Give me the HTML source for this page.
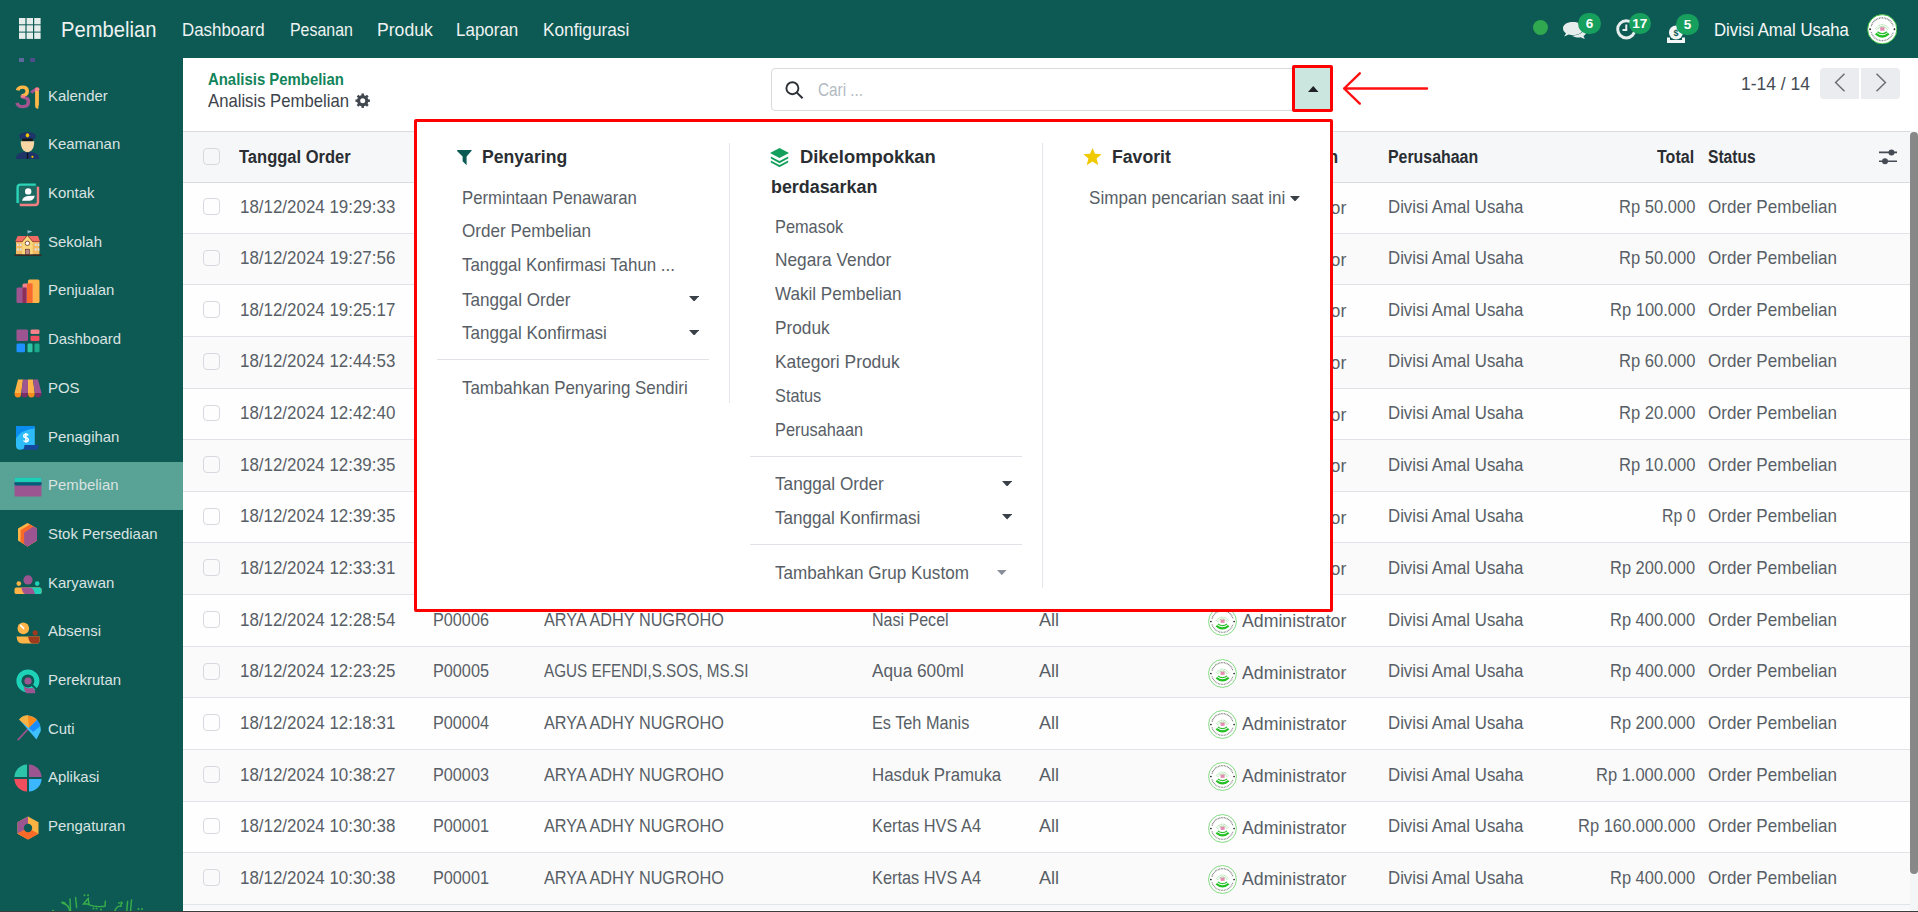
<!DOCTYPE html><html><head><meta charset="utf-8"><style>
*{box-sizing:border-box;margin:0;padding:0}
html,body{width:1918px;height:912px;overflow:hidden;background:#fff;font-family:"Liberation Sans",sans-serif;position:relative}
.a{position:absolute;white-space:nowrap}
.cb{width:16.8px;height:16.8px;border:1px solid #d6d9de;border-radius:4px;background:transparent}
.badge{position:absolute;background:#17a05d;color:#fff;font-size:13.5px;font-weight:700;text-align:center;border-radius:11px;height:21px;line-height:21px}
</style></head><body>

<div class="a" style="left:0;top:0;width:1918px;height:58px;background:#0d5a55"></div>
<svg class="a" style="left:19px;top:18px" width="22" height="21" viewBox="0 0 22 21"><rect x="0.0" y="0.0" width="6.4" height="6.3" fill="#e6eeec"/><rect x="7.6" y="0.0" width="6.4" height="6.3" fill="#e6eeec"/><rect x="15.2" y="0.0" width="6.4" height="6.3" fill="#e6eeec"/><rect x="0.0" y="7.3" width="6.4" height="6.3" fill="#e6eeec"/><rect x="7.6" y="7.3" width="6.4" height="6.3" fill="#e6eeec"/><rect x="15.2" y="7.3" width="6.4" height="6.3" fill="#e6eeec"/><rect x="0.0" y="14.6" width="6.4" height="6.3" fill="#e6eeec"/><rect x="7.6" y="14.6" width="6.4" height="6.3" fill="#e6eeec"/><rect x="15.2" y="14.6" width="6.4" height="6.3" fill="#e6eeec"/></svg>
<div class="a" style="left:60.60px;top:19.50px;font-size:21.37px;line-height:20px;font-weight:400;color:#eef2f1;transform:scaleX(0.9449);transform-origin:0 0;">Pembelian</div>
<div class="a" style="left:182.40px;top:20.15px;font-size:18.90px;line-height:20px;font-weight:400;color:#eef2f1;transform:scaleX(0.8946);transform-origin:0 0;">Dashboard</div>
<div class="a" style="left:290.30px;top:20.15px;font-size:18.90px;line-height:20px;font-weight:400;color:#eef2f1;transform:scaleX(0.8432);transform-origin:0 0;">Pesanan</div>
<div class="a" style="left:377.20px;top:20.15px;font-size:18.90px;line-height:20px;font-weight:400;color:#eef2f1;transform:scaleX(0.9320);transform-origin:0 0;">Produk</div>
<div class="a" style="left:456.40px;top:20.15px;font-size:18.90px;line-height:20px;font-weight:400;color:#eef2f1;transform:scaleX(0.8984);transform-origin:0 0;">Laporan</div>
<div class="a" style="left:542.80px;top:20.15px;font-size:18.90px;line-height:20px;font-weight:400;color:#eef2f1;transform:scaleX(0.9129);transform-origin:0 0;">Konfigurasi</div>
<div class="a" style="left:1532.7px;top:19.7px;width:15.8px;height:15.8px;border-radius:50%;background:#2fa84f"></div>
<svg class="a" style="left:1562px;top:20px" width="25" height="20" viewBox="0 0 25 20">
<path d="M11 2 C17 2 21 4.5 21 8.5 C21 12.5 17 15 11 15 C9.5 15 8 14.8 6.7 14.4 L2.2 16.4 L4 13.2 C2 12 1 10.4 1 8.5 C1 4.5 5 2 11 2Z" fill="#e6eded"/>
<path d="M22 9 C23.5 10 24 11.2 24 12.5 C24 14 23 15.2 21.5 16 L22.8 19 L18.5 17.3 C17.5 17.5 16.5 17.6 15.5 17.5 C13 17.3 11 16.5 10 15.5 C16 15.5 21.5 13 22 9Z" fill="#e6eded"/>
</svg>
<div class="badge" style="left:1578px;top:12.7px;width:22.8px">6</div>
<svg class="a" style="left:1616px;top:18.5px" width="21" height="21" viewBox="0 0 21 21">
<circle cx="10.3" cy="10.3" r="8.6" fill="none" stroke="#e6eded" stroke-width="3"/>
<path d="M10.3 5.5 V11 H6.5" fill="none" stroke="#e6eded" stroke-width="2"/></svg>
<div class="badge" style="left:1628.7px;top:12.7px;width:22px">17</div>
<svg class="a" style="left:1665.5px;top:23.5px" width="20" height="20" viewBox="0 0 20 20">
<circle cx="10" cy="8.5" r="7" fill="#f4f7f7"/>
<text x="10" y="12" font-size="9" font-weight="700" text-anchor="middle" fill="#0d5a55" font-family="Liberation Sans">$</text>
<path d="M1 13.5 H4 V16 H16 V13.5 H19 V19 H1Z" fill="#f4f7f7"/></svg>
<div class="badge" style="left:1676.3px;top:13.8px;width:22.5px">5</div>
<div class="a" style="left:1714.30px;top:19.95px;font-size:18.90px;line-height:20px;font-weight:400;color:#f6f8f8;transform:scaleX(0.8858);transform-origin:0 0;">Divisi Amal Usaha</div>
<div class="a" style="left:1866.8px;top:13.6px"><svg width="30.5" height="30.5" viewBox="0 0 30 30"><circle cx="15" cy="15" r="14.4" fill="#fff" stroke="#33bb33" stroke-width="0.9"/>
<path d="M4.2 12 A11.2 11.2 0 0 1 25.8 12" fill="none" stroke="#777" stroke-width="1.3" stroke-dasharray="0.9 0.7"/>
<path d="M4.2 18 A11.2 11.2 0 0 0 25.8 18" fill="none" stroke="#888" stroke-width="1.3" stroke-dasharray="0.9 0.7"/>
<circle cx="3" cy="15" r="0.9" fill="#222"/><circle cx="27" cy="15" r="0.9" fill="#222"/>
<path d="M8.2 14.5 Q15 6.5 21.8 14.5" fill="none" stroke="#8ad88a" stroke-width="0.9" stroke-dasharray="1 0.6"/>
<path d="M10 15.2 Q15 9.5 20 15.2" fill="none" stroke="#5cc95c" stroke-width="0.9" stroke-dasharray="1 0.6"/>
<rect x="13" y="13" width="4.2" height="3.4" fill="#e48bb0"/>
<path d="M10.3 17.6 Q15 21 19.7 17.6" fill="none" stroke="#2ec12e" stroke-width="1.4"/>
<path d="M8.6 19.4 Q15 25 21.4 19.4" fill="none" stroke="#22bf22" stroke-width="2.3"/>
</svg></div>
<div class="a" style="left:0;top:58px;width:183px;height:854px;background:#0d5a55"></div>
<div class="a" style="left:0;top:462px;width:183px;height:48px;background:#58a296"></div>
<div class="a" style="left:47.80px;top:85.81px;font-size:15.55px;line-height:20px;font-weight:400;color:#d9e3e1;transform:scaleX(0.96);transform-origin:0 0;">Kalender</div>
<div class="a" style="left:47.80px;top:134.48px;font-size:15.55px;line-height:20px;font-weight:400;color:#d9e3e1;transform:scaleX(0.96);transform-origin:0 0;">Keamanan</div>
<div class="a" style="left:47.80px;top:183.15px;font-size:15.55px;line-height:20px;font-weight:400;color:#d9e3e1;transform:scaleX(0.96);transform-origin:0 0;">Kontak</div>
<div class="a" style="left:47.80px;top:231.82px;font-size:15.55px;line-height:20px;font-weight:400;color:#d9e3e1;transform:scaleX(0.96);transform-origin:0 0;">Sekolah</div>
<div class="a" style="left:47.80px;top:280.49px;font-size:15.55px;line-height:20px;font-weight:400;color:#d9e3e1;transform:scaleX(0.96);transform-origin:0 0;">Penjualan</div>
<div class="a" style="left:47.80px;top:329.16px;font-size:15.55px;line-height:20px;font-weight:400;color:#d9e3e1;transform:scaleX(0.96);transform-origin:0 0;">Dashboard</div>
<div class="a" style="left:47.80px;top:377.83px;font-size:15.55px;line-height:20px;font-weight:400;color:#d9e3e1;transform:scaleX(0.96);transform-origin:0 0;">POS</div>
<div class="a" style="left:47.80px;top:426.50px;font-size:15.55px;line-height:20px;font-weight:400;color:#d9e3e1;transform:scaleX(0.96);transform-origin:0 0;">Penagihan</div>
<div class="a" style="left:47.80px;top:475.17px;font-size:15.55px;line-height:20px;font-weight:400;color:#d9e3e1;transform:scaleX(0.96);transform-origin:0 0;">Pembelian</div>
<div class="a" style="left:47.80px;top:523.84px;font-size:15.55px;line-height:20px;font-weight:400;color:#d9e3e1;transform:scaleX(0.96);transform-origin:0 0;">Stok Persediaan</div>
<div class="a" style="left:47.80px;top:572.51px;font-size:15.55px;line-height:20px;font-weight:400;color:#d9e3e1;transform:scaleX(0.96);transform-origin:0 0;">Karyawan</div>
<div class="a" style="left:47.80px;top:621.18px;font-size:15.55px;line-height:20px;font-weight:400;color:#d9e3e1;transform:scaleX(0.96);transform-origin:0 0;">Absensi</div>
<div class="a" style="left:47.80px;top:669.85px;font-size:15.55px;line-height:20px;font-weight:400;color:#d9e3e1;transform:scaleX(0.96);transform-origin:0 0;">Perekrutan</div>
<div class="a" style="left:47.80px;top:718.52px;font-size:15.55px;line-height:20px;font-weight:400;color:#d9e3e1;transform:scaleX(0.96);transform-origin:0 0;">Cuti</div>
<div class="a" style="left:47.80px;top:767.19px;font-size:15.55px;line-height:20px;font-weight:400;color:#d9e3e1;transform:scaleX(0.96);transform-origin:0 0;">Aplikasi</div>
<div class="a" style="left:47.80px;top:815.86px;font-size:15.55px;line-height:20px;font-weight:400;color:#d9e3e1;transform:scaleX(0.96);transform-origin:0 0;">Pengaturan</div>
<div class="a" style="left:19px;top:58px;width:4.6px;height:3.7px;background:#5b6a9a"></div>
<div class="a" style="left:30px;top:58px;width:5.4px;height:3.7px;background:#4d4d8c"></div>
<svg class="a" style="left:12px;top:82px" width="32" height="30" viewBox="0 0 32 30"><g transform="translate(0 1.6) scale(1 0.9)"><path d="M5.6 7.6 Q6.4 4 10.6 4 Q15.2 4 15.2 8.6 Q15.2 13 9.6 13.6" fill="none" stroke="#ffb847" stroke-width="3.6"/>
<path d="M9.6 15 Q16.4 15 16.4 20.2 Q16.4 25.6 10.6 25.6 Q6 25.6 5 21.3" fill="none" stroke="#a0558f" stroke-width="3.6"/>
<path d="M8.6 14.3 H13" stroke="#f98289" stroke-width="2.6"/>
<path d="M19.2 10 L24.6 5.6" stroke="#a0558f" stroke-width="3.2"/>
<path d="M25 6.2 V24.6 Q25 26 26.4 26" fill="none" stroke="#ffb847" stroke-width="3.8" stroke-linecap="butt"/>
<circle cx="25.2" cy="6.3" r="2.2" fill="#f98289"/></g></svg>
<svg class="a" style="left:12px;top:128px" width="32" height="34" viewBox="0 0 32 34"><path d="M8.2 11 L7.2 7.2 Q7.8 5 15.5 4 Q23.3 5 23.9 7.2 L22.9 11Z" fill="#1f3468"/>
<ellipse cx="15.5" cy="7.3" rx="1.7" ry="2.1" fill="#f5c400"/>
<rect x="10" y="10.6" width="11" height="2.8" rx="1.4" fill="#14161c"/>
<path d="M8.8 13.2 H22.2 Q22.4 19.5 19.2 22.8 Q15.5 25.6 11.8 22.8 Q8.6 19.5 8.8 13.2Z" fill="#f7d5a4"/>
<path d="M3.8 31 Q3.6 26.2 9.6 24.6 L12.4 23.8 Q15.5 25.4 18.6 23.8 L21.4 24.6 Q27.4 26.2 27.2 31Z" fill="#1f3468"/>
<rect x="14.9" y="25" width="1.3" height="5.8" fill="#111"/>
<circle cx="20.4" cy="28.8" r="1.1" fill="#f5c400"/></svg>
<svg class="a" style="left:15.5px;top:182.5px" width="24" height="24" viewBox="0 0 24 24"><rect x="1.6" y="1.6" width="20.4" height="20.4" rx="3" fill="#1c6a62"/>
<path d="M1.6 20 V4.6 Q1.6 1.6 4.6 1.6 H19.8" fill="none" stroke="#2bd4b8" stroke-width="2.4"/>
<path d="M3.8 22 H19 Q22 22 22 19 V3.8" fill="none" stroke="#f47f83" stroke-width="2.4"/>
<circle cx="12.2" cy="8.4" r="3.2" fill="#fff"/>
<path d="M6 17.8 Q7 13.4 12 13 L18.8 12.8 Q17.6 17.8 13 17.8Z" fill="#fff"/></svg>
<svg class="a" style="left:12px;top:226px" width="32" height="32" viewBox="0 0 32 32"><path d="M15.4 9.8 V4.4" stroke="#4d6a70" stroke-width="0.7"/><path d="M15.6 4.2 L20.4 5.6 L15.8 7.2Z" fill="#8fc4d6"/>
<rect x="4" y="15.2" width="23.4" height="13.2" fill="#f4b860"/>
<rect x="5.0" y="17.6" width="1.7" height="2.4" fill="#dde2e5"/><rect x="5.0" y="22.3" width="1.7" height="2.4" fill="#dde2e5"/><rect x="7.8" y="17.6" width="1.7" height="2.4" fill="#dde2e5"/><rect x="7.8" y="22.3" width="1.7" height="2.4" fill="#dde2e5"/><rect x="22.8" y="17.6" width="1.7" height="2.4" fill="#dde2e5"/><rect x="22.8" y="22.3" width="1.7" height="2.4" fill="#dde2e5"/><rect x="25.6" y="17.6" width="1.7" height="2.4" fill="#dde2e5"/><rect x="25.6" y="22.3" width="1.7" height="2.4" fill="#dde2e5"/>
<path d="M5.6 10 H26 L28 15.6 H3.3Z" fill="#ee6a62"/>
<rect x="3.3" y="15" width="24.7" height="0.8" fill="#9c3b3b"/>
<path d="M10.2 15.6 L15.4 9.6 L20.7 15.6 V28.4 H10.2Z" fill="#f9d77c"/>
<path d="M9.8 16 L15.4 9.4 L21.1 16" fill="none" stroke="#8a3a30" stroke-width="0.9"/>
<circle cx="15.4" cy="17.3" r="2.2" fill="#fff" stroke="#7a3a2a" stroke-width="0.9"/>
<rect x="13.3" y="23.2" width="4.2" height="5.2" fill="#c08585" stroke="#5a2a2a" stroke-width="0.6"/>
<rect x="2.5" y="28.4" width="27" height="1.6" fill="#3a2a25"/></svg>
<svg class="a" style="left:15.5px;top:279px" width="24" height="25" viewBox="0 0 24 25"><rect x="12" y="0.5" width="11.5" height="23.5" rx="1.5" fill="#ffb44a"/>
<rect x="6.5" y="4.5" width="10" height="19.5" rx="1.5" fill="#f5828a"/>
<rect x="11" y="4.5" width="5.5" height="19.5" fill="#f96a2a"/>
<rect x="0.5" y="8.6" width="10" height="15.4" rx="1.5" fill="#9d5592"/>
<rect x="6.5" y="8.6" width="4" height="15.4" fill="#8a2f5a"/></svg>
<svg class="a" style="left:15.5px;top:328.5px" width="24" height="24" viewBox="0 0 24 24"><rect x="0.5" y="0.5" width="11.5" height="11.5" rx="1.3" fill="#9d5592"/>
<rect x="14.5" y="0.5" width="9" height="4.6" rx="1.3" fill="#f5828a"/>
<rect x="14.5" y="6.8" width="9" height="5.2" rx="1.3" fill="#f04e5e"/>
<rect x="0.5" y="14.5" width="8.5" height="8.7" rx="1.3" fill="#1e90ff"/>
<rect x="11.5" y="14.5" width="5" height="8.7" rx="1.3" fill="#2ec4a6"/>
<rect x="18.5" y="14.5" width="5" height="8.7" rx="1.3" fill="#1bab8c"/></svg>
<svg class="a" style="left:13.5px;top:378.5px" width="28" height="20" viewBox="0 0 28 20"><path d="M4 0.5 H9 L7.25 14 H0.5Z" fill="#ffb447"/>
<path d="M9 0.5 H14 V14 H7.25Z" fill="#9d5592"/>
<path d="M14 0.5 H19 L20.75 14 H14Z" fill="#ffb447"/>
<path d="M19 0.5 H24 L27.5 14 H20.75Z" fill="#9d5592"/>
<path d="M0.5 14 H7.25 Q7.25 18.6 3.9 18.6 Q0.5 18.6 0.5 14Z" fill="#f98a1e"/>
<path d="M7.25 14 H14 Q14 18.6 10.6 18.6 Q7.25 18.6 7.25 14Z" fill="#7a2f66"/>
<path d="M14 14 H20.75 Q20.75 18.6 17.4 18.6 Q14 18.6 14 14Z" fill="#f98a1e"/>
<path d="M20.75 14 H27.5 Q27.5 18.6 24.1 18.6 Q20.75 18.6 20.75 14Z" fill="#7a2f66"/></svg>
<svg class="a" style="left:12px;top:422px" width="32" height="32" viewBox="0 0 32 32"><path d="M4 4 H21.5 Q22.8 4 22.8 5.5 V23 H12.6 V24.6 Q12.6 27.8 8.3 27.8 Q4 27.8 4 23.5Z" fill="#2ebcf8"/>
<path d="M4 4 H21.5 Q22.8 4 22.8 5.5 V6.6 Q9.5 7.6 4 16.6Z" fill="#0a8cf0"/>
<path d="M12.6 23 H27 L25.4 27.8 H8.4 Q12.6 27.8 12.6 24.6Z" fill="#15479a"/>
<path d="M16.2 13.3 Q15.7 12.3 13.8 12.3 Q11.7 12.3 11.7 14.1 Q11.7 15.5 13.9 15.8 Q16.3 16.1 16.3 17.8 Q16.3 19.6 13.9 19.6 Q12.1 19.6 11.5 18.5 M13.9 11 V20.8" fill="none" stroke="#fff" stroke-width="1.5"/></svg>
<svg class="a" style="left:13.5px;top:476.5px" width="28" height="20" viewBox="0 0 28 20"><rect x="0.5" y="0.5" width="27" height="19" rx="1.5" fill="#9b5590"/>
<path d="M0.5 2 Q0.5 0.5 2 0.5 H26 Q27.5 0.5 27.5 2 V5.3 H0.5Z" fill="#1ad1b5"/>
<path d="M0.5 5.3 H27.5 V7.5 Q27.5 8.6 26 8.6 H2 Q0.5 8.6 0.5 7.5Z" fill="#005f7a"/></svg>
<svg class="a" style="left:12px;top:518px" width="32" height="32" viewBox="0 0 32 32"><path d="M15.5 5 L25 10.5 V22.5 L15.5 28.4 L6 22.5 V10.5Z" fill="#ffb447"/>
<path d="M18 6.4 L25 10.5 V22.5 L15.5 28.4 L8.6 24.1 V11.9Z" fill="#f96a29"/>
<path d="M21.3 8.4 L25 10.5 V22.5 L15.5 28.4 L12.1 26.3 V14.7Z" fill="#9d5592"/></svg>
<svg class="a" style="left:13.5px;top:573.5px" width="28" height="21" viewBox="0 0 28 21"><circle cx="14" cy="5.9" r="4.6" fill="#9d5592"/>
<circle cx="4.8" cy="9.6" r="2.3" fill="#ffb447"/><circle cx="23.2" cy="9.6" r="2.3" fill="#1ed2b8"/>
<rect x="0.5" y="13.5" width="27" height="6.6" rx="1.9" fill="#ffb447"/>
<path d="M15 13.5 H25.6 Q27.5 13.5 27.5 15.4 V18.2 Q27.5 20.1 25.6 20.1 H20Z" fill="#1ed2b8"/>
<path d="M7.4 13.5 H15.6 Q20.2 14 20.8 20.1 H11.2 Q8.4 19.4 7.4 13.5Z" fill="#9d5592"/></svg>
<svg class="a" style="left:15.5px;top:621.5px" width="24" height="22" viewBox="0 0 24 22"><circle cx="7.3" cy="6.4" r="5.8" fill="#ffb447"/>
<path d="M4.6 3.4 L7.6 6.4" stroke="#fff" stroke-width="1.6" stroke-linecap="round"/>
<circle cx="19.2" cy="10.8" r="2.6" fill="#9e3a1e"/>
<path d="M0.5 14.6 H23.5 V19.6 Q23.5 21.5 21.6 21.5 H6 Q1.2 21.5 0.5 14.6Z" fill="#ffb447"/>
<path d="M12 14.6 H23.5 V19.6 Q23.5 21.5 21.6 21.5 H16.5 Q13.4 21.5 12 14.6Z" fill="#9e3a1e"/></svg>
<svg class="a" style="left:15.5px;top:668.5px" width="24" height="25" viewBox="0 0 24 25"><circle cx="11.9" cy="11.9" r="9" fill="none" stroke="#1ed2b8" stroke-width="5"/>
<path d="M15.8 15.8 L22 22" stroke="#0d5a55" stroke-width="2"/>
<circle cx="12" cy="12" r="3.6" fill="#9d5592"/>
<path d="M7.8 17.6 Q10 19.2 12.5 19.2 L17.2 19.1 Q19.4 20.8 19.4 24.3 H10.8 Q8.2 22.6 7.8 17.6Z" fill="#9d5592"/></svg>
<svg class="a" style="left:17px;top:715px" width="25" height="26" viewBox="0 0 25 26"><path d="M1 21 L0.9 25.5" stroke="none"/>
<path d="M1.2 24.6 L12 13" stroke="#9b5590" stroke-width="1.8" stroke-linecap="round"/>
<path d="M2.2 4.4 Q6 0.2 11 0.6 Q17 1.2 20 5 Q24 9.6 23.8 16 Q21.6 20 19.5 24.5 Z" fill="#3fc0ff"/>
<path d="M2.2 4.4 Q6 0.2 11 0.6 Q17 1.2 20 5 L12 13Z" fill="#f98a1e"/>
<path d="M2.2 4.4 Q6 0.2 11 0.6 L12 13Z" fill="#f9b343"/>
<path d="M20 5 Q22.5 7.5 23.3 11 L16 17 L12 13Z" fill="#1a8cff"/></svg>
<svg class="a" style="left:13.5px;top:764px" width="28" height="28" viewBox="0 0 28 28"><path d="M13 13 H0.3 A13.5 13.5 0 0 1 13 0.4Z" fill="#2ec4a9"/>
<path d="M15 13 V0.4 A13.5 13.5 0 0 1 27.7 13Z" fill="#9b5590"/>
<path d="M13 15 V27.6 A13.5 13.5 0 0 1 0.3 15Z" fill="#f04e5e"/>
<path d="M15 15 H27.7 A13.5 13.5 0 0 1 15 27.6Z" fill="#3ab7ff"/></svg>
<svg class="a" style="left:16.5px;top:815.5px" width="22" height="24" viewBox="0 0 22 24"><path d="M11 0.5 L21.5 6.3 V17.7 L11 23.5 L0.5 17.7 V6.3Z" fill="#f9b343"/>
<path d="M11 0.5 V12 L0.5 17.7 V6.3Z" fill="#9b5590"/>
<path d="M0.5 17.7 L11 12 L21.5 17.7 L11 23.5Z" fill="#f96a29"/>
<circle cx="11" cy="12" r="4.2" fill="#0d5a55"/></svg>
<svg class="a" style="left:45px;top:880px" width="110" height="32" viewBox="0 0 110 32"><g fill="none" stroke="#38ad4a" stroke-width="1.45" stroke-linecap="round">
<ellipse cx="18.5" cy="23" rx="2.6" ry="1.3" transform="rotate(20 18.5 23)" fill="#38ad4a" stroke="none"/>
<path d="M20 24 Q24 26 24.5 30.5"/><path d="M25 19 L25.5 30.5"/>
<path d="M30.6 17.5 L31.6 27.5"/>
<path d="M38.5 24 L43.2 18.5 L44 24Z"/>
<path d="M43.5 24.6 Q50 27.5 60 26.2 L60.4 21.3"/>
<path d="M70 30.5 Q72 25.5 76 26.2 L76.2 22"/><path d="M82.6 21.5 L81.8 30.5"/><path d="M86.5 20 L85.6 30.5"/>
</g>
<g fill="#38ad4a"><circle cx="39.5" cy="15.2" r="1"/><circle cx="43" cy="15.2" r="1"/><circle cx="48.5" cy="28.5" r="1"/><circle cx="51.5" cy="28.5" r="1"/><circle cx="56" cy="29.5" r="1"/>
<circle cx="74" cy="23" r="0.9"/><circle cx="77" cy="23" r="0.9"/><circle cx="93.5" cy="29" r="1"/><circle cx="97" cy="29" r="1"/><circle cx="8" cy="31" r="1.2"/></g></svg>
<div class="a" style="left:208.00px;top:69.61px;font-size:16.72px;line-height:20px;font-weight:700;color:#12845a;transform:scaleX(0.8926);transform-origin:0 0;">Analisis Pembelian</div>
<div class="a" style="left:208.00px;top:90.80px;font-size:19.04px;line-height:20px;font-weight:400;color:#3d434b;transform:scaleX(0.8765);transform-origin:0 0;">Analisis Pembelian</div>
<svg class="a" style="left:354.6px;top:92.8px" width="15.4" height="15.4" viewBox="0 0 16 16"><g fill="#41474e"><rect x="6.7" y="0.5" width="2.6" height="3.5" transform="rotate(0 8 8)"/><rect x="6.7" y="0.5" width="2.6" height="3.5" transform="rotate(45 8 8)"/><rect x="6.7" y="0.5" width="2.6" height="3.5" transform="rotate(90 8 8)"/><rect x="6.7" y="0.5" width="2.6" height="3.5" transform="rotate(135 8 8)"/><rect x="6.7" y="0.5" width="2.6" height="3.5" transform="rotate(180 8 8)"/><rect x="6.7" y="0.5" width="2.6" height="3.5" transform="rotate(225 8 8)"/><rect x="6.7" y="0.5" width="2.6" height="3.5" transform="rotate(270 8 8)"/><rect x="6.7" y="0.5" width="2.6" height="3.5" transform="rotate(315 8 8)"/><circle cx="8" cy="8" r="5.9"/></g><circle cx="8" cy="8" r="2.6" fill="#fff"/></svg>
<div class="a" style="left:771px;top:68px;width:560px;height:42.5px;border:1px solid #d8dadd;border-radius:4px;background:#fff"></div>
<svg class="a" style="left:783.5px;top:79.5px" width="20" height="20" viewBox="0 0 20 20"><circle cx="8.4" cy="8.2" r="6" fill="none" stroke="#2b3036" stroke-width="1.9"/><path d="M12.6 12.4 L18.6 18.2" stroke="#2b3036" stroke-width="2"/></svg>
<div class="a" style="left:817.80px;top:80.05px;font-size:18.60px;line-height:20px;font-weight:400;color:#b3bac2;transform:scaleX(0.8232);transform-origin:0 0;">Cari ...</div>
<div class="a" style="left:1294px;top:68px;width:37px;height:42px;background:#cbe6de"></div>
<svg class="a" style="left:1308px;top:85.8px" width="10.5" height="6" viewBox="0 0 10.5 6"><path d="M0 6 L5.25 0 L10.5 6Z" fill="#1f2328"/></svg>
<div class="a" style="left:1740.80px;top:73.70px;font-size:18.17px;line-height:20px;font-weight:400;color:#454b52;transform:scaleX(0.9621);transform-origin:0 0;">1-14 / 14</div>
<div class="a" style="left:1820.1px;top:68.1px;width:39px;height:31.4px;background:#eaecef;border-radius:4px 0 0 4px"></div>
<div class="a" style="left:1860.9px;top:68.1px;width:39px;height:31.4px;background:#eaecef;border-radius:0 4px 4px 0"></div>
<svg class="a" style="left:1834px;top:73px" width="12" height="19" viewBox="0 0 12 19"><path d="M10.5 0.8 L1.6 9.5 L10.5 18.2" fill="none" stroke="#6b6f74" stroke-width="1.5"/></svg>
<svg class="a" style="left:1874.5px;top:73px" width="12" height="19" viewBox="0 0 12 19"><path d="M1.5 0.8 L10.4 9.5 L1.5 18.2" fill="none" stroke="#6b6f74" stroke-width="1.5"/></svg>
<div class="a" style="left:183px;top:131px;width:1727px;height:52px;background:#f6f7f9;border-top:1px solid #d8dbe0;border-bottom:1px solid #d8dbe0"></div>
<div class="a cb" style="left:203.3px;top:148px"></div>
<div class="a" style="left:239.30px;top:147.30px;font-size:18.75px;line-height:20px;font-weight:700;color:#2a2e33;transform:scaleX(0.8812);transform-origin:0 0;">Tanggal Order</div>
<div class="a" style="left:432.20px;top:147.30px;font-size:18.75px;line-height:20px;font-weight:700;color:#2a2e33;">Referensi</div>
<div class="a" style="left:544.10px;top:147.30px;font-size:18.75px;line-height:20px;font-weight:700;color:#2a2e33;">Pemasok</div>
<div class="a" style="left:871.80px;top:147.30px;font-size:18.75px;line-height:20px;font-weight:700;color:#2a2e33;">Produk</div>
<div class="a" style="left:1207.50px;top:147.30px;font-size:18.75px;line-height:20px;font-weight:700;color:#2a2e33;transform:scaleX(0.8827);transform-origin:0 0;">Wakil Pembelian</div>
<div class="a" style="left:1387.90px;top:147.30px;font-size:18.75px;line-height:20px;font-weight:700;color:#2a2e33;transform:scaleX(0.8476);transform-origin:0 0;">Perusahaan</div>
<div class="a" style="left:1657.40px;top:147.30px;font-size:18.75px;line-height:20px;font-weight:700;color:#2a2e33;transform:scaleX(0.8549);transform-origin:0 0;">Total</div>
<div class="a" style="left:1707.80px;top:147.30px;font-size:18.75px;line-height:20px;font-weight:700;color:#2a2e33;transform:scaleX(0.8307);transform-origin:0 0;">Status</div>
<svg class="a" style="left:1878px;top:148px" width="20" height="17" viewBox="0 0 20 17"><path d="M1 4.4 H19 M1 13.3 H19" stroke="#454b54" stroke-width="1.6"/><circle cx="13.5" cy="4.4" r="3" fill="#454b54"/><circle cx="7" cy="13.3" r="3" fill="#454b54"/></svg>
<div class="a" style="left:183px;top:182.07px;width:1727px;height:51.63px;background:#fefefe;border-bottom:1px solid #e0e3e7"></div>
<div class="a cb" style="left:203.3px;top:198.07px"></div>
<div class="a" style="left:240.00px;top:196.57px;font-size:18.46px;line-height:20px;font-weight:400;color:#585e66;transform:scaleX(0.9181);transform-origin:0 0;">18/12/2024 19:29:33</div>
<div class="a" style="left:432.50px;top:196.57px;font-size:18.46px;line-height:20px;font-weight:400;color:#585e66;transform:scaleX(0.8799);transform-origin:0 0;">P00013</div>
<div class="a" style="left:544.10px;top:196.57px;font-size:18.46px;line-height:20px;font-weight:400;color:#585e66;transform:scaleX(0.8818);transform-origin:0 0;">ARYA ADHY NUGROHO</div>
<div class="a" style="left:872.00px;top:196.57px;font-size:18.46px;line-height:20px;font-weight:400;color:#585e66;transform:scaleX(0.8693);transform-origin:0 0;">Nasi Pecel</div>
<div class="a" style="left:1039.30px;top:196.57px;font-size:18.46px;line-height:20px;font-weight:400;color:#585e66;transform:scaleX(0.9798);transform-origin:0 0;">All</div>
<div class="a" style="left:1207.9px;top:194.07px"><svg width="29" height="29" viewBox="0 0 30 30"><circle cx="15" cy="15" r="14.4" fill="#fff" stroke="#6fd66f" stroke-width="0.9"/>
<path d="M4.2 12 A11.2 11.2 0 0 1 25.8 12" fill="none" stroke="#777" stroke-width="1.3" stroke-dasharray="0.9 0.7"/>
<path d="M4.2 18 A11.2 11.2 0 0 0 25.8 18" fill="none" stroke="#888" stroke-width="1.3" stroke-dasharray="0.9 0.7"/>
<circle cx="3" cy="15" r="0.9" fill="#222"/><circle cx="27" cy="15" r="0.9" fill="#222"/>
<path d="M8.2 14.5 Q15 6.5 21.8 14.5" fill="none" stroke="#8ad88a" stroke-width="0.9" stroke-dasharray="1 0.6"/>
<path d="M10 15.2 Q15 9.5 20 15.2" fill="none" stroke="#5cc95c" stroke-width="0.9" stroke-dasharray="1 0.6"/>
<rect x="13" y="13" width="4.2" height="3.4" fill="#e48bb0"/>
<path d="M10.3 17.6 Q15 21 19.7 17.6" fill="none" stroke="#2ec12e" stroke-width="1.4"/>
<path d="M8.6 19.4 Q15 25 21.4 19.4" fill="none" stroke="#22bf22" stroke-width="2.3"/>
</svg></div>
<div class="a" style="left:1242.20px;top:198.07px;font-size:18.46px;line-height:20px;font-weight:400;color:#585e66;transform:scaleX(0.9610);transform-origin:0 0;">Administrator</div>
<div class="a" style="left:1387.90px;top:196.57px;font-size:18.46px;line-height:20px;font-weight:400;color:#585e66;transform:scaleX(0.9107);transform-origin:0 0;">Divisi Amal Usaha</div>
<div class="a" style="left:1618.70px;top:196.57px;font-size:18.46px;line-height:20px;font-weight:400;color:#585e66;transform:scaleX(0.8980);transform-origin:0 0;">Rp 50.000</div>
<div class="a" style="left:1707.50px;top:196.57px;font-size:18.46px;line-height:20px;font-weight:400;color:#585e66;transform:scaleX(0.9252);transform-origin:0 0;">Order Pembelian</div>
<div class="a" style="left:183px;top:233.70px;width:1727px;height:51.63px;background:#fafafa;border-bottom:1px solid #e0e3e7"></div>
<div class="a cb" style="left:203.3px;top:249.70px"></div>
<div class="a" style="left:240.00px;top:248.20px;font-size:18.46px;line-height:20px;font-weight:400;color:#585e66;transform:scaleX(0.9181);transform-origin:0 0;">18/12/2024 19:27:56</div>
<div class="a" style="left:432.50px;top:248.20px;font-size:18.46px;line-height:20px;font-weight:400;color:#585e66;transform:scaleX(0.8799);transform-origin:0 0;">P00012</div>
<div class="a" style="left:544.10px;top:248.20px;font-size:18.46px;line-height:20px;font-weight:400;color:#585e66;transform:scaleX(0.8818);transform-origin:0 0;">ARYA ADHY NUGROHO</div>
<div class="a" style="left:872.00px;top:248.20px;font-size:18.46px;line-height:20px;font-weight:400;color:#585e66;transform:scaleX(0.8693);transform-origin:0 0;">Nasi Pecel</div>
<div class="a" style="left:1039.30px;top:248.20px;font-size:18.46px;line-height:20px;font-weight:400;color:#585e66;transform:scaleX(0.9798);transform-origin:0 0;">All</div>
<div class="a" style="left:1207.9px;top:245.70px"><svg width="29" height="29" viewBox="0 0 30 30"><circle cx="15" cy="15" r="14.4" fill="#fff" stroke="#6fd66f" stroke-width="0.9"/>
<path d="M4.2 12 A11.2 11.2 0 0 1 25.8 12" fill="none" stroke="#777" stroke-width="1.3" stroke-dasharray="0.9 0.7"/>
<path d="M4.2 18 A11.2 11.2 0 0 0 25.8 18" fill="none" stroke="#888" stroke-width="1.3" stroke-dasharray="0.9 0.7"/>
<circle cx="3" cy="15" r="0.9" fill="#222"/><circle cx="27" cy="15" r="0.9" fill="#222"/>
<path d="M8.2 14.5 Q15 6.5 21.8 14.5" fill="none" stroke="#8ad88a" stroke-width="0.9" stroke-dasharray="1 0.6"/>
<path d="M10 15.2 Q15 9.5 20 15.2" fill="none" stroke="#5cc95c" stroke-width="0.9" stroke-dasharray="1 0.6"/>
<rect x="13" y="13" width="4.2" height="3.4" fill="#e48bb0"/>
<path d="M10.3 17.6 Q15 21 19.7 17.6" fill="none" stroke="#2ec12e" stroke-width="1.4"/>
<path d="M8.6 19.4 Q15 25 21.4 19.4" fill="none" stroke="#22bf22" stroke-width="2.3"/>
</svg></div>
<div class="a" style="left:1242.20px;top:249.70px;font-size:18.46px;line-height:20px;font-weight:400;color:#585e66;transform:scaleX(0.9610);transform-origin:0 0;">Administrator</div>
<div class="a" style="left:1387.90px;top:248.20px;font-size:18.46px;line-height:20px;font-weight:400;color:#585e66;transform:scaleX(0.9107);transform-origin:0 0;">Divisi Amal Usaha</div>
<div class="a" style="left:1618.70px;top:248.20px;font-size:18.46px;line-height:20px;font-weight:400;color:#585e66;transform:scaleX(0.8980);transform-origin:0 0;">Rp 50.000</div>
<div class="a" style="left:1707.50px;top:248.20px;font-size:18.46px;line-height:20px;font-weight:400;color:#585e66;transform:scaleX(0.9252);transform-origin:0 0;">Order Pembelian</div>
<div class="a" style="left:183px;top:285.33px;width:1727px;height:51.63px;background:#fefefe;border-bottom:1px solid #e0e3e7"></div>
<div class="a cb" style="left:203.3px;top:301.33px"></div>
<div class="a" style="left:240.00px;top:299.83px;font-size:18.46px;line-height:20px;font-weight:400;color:#585e66;transform:scaleX(0.9181);transform-origin:0 0;">18/12/2024 19:25:17</div>
<div class="a" style="left:432.50px;top:299.83px;font-size:18.46px;line-height:20px;font-weight:400;color:#585e66;transform:scaleX(0.8992);transform-origin:0 0;">P00011</div>
<div class="a" style="left:544.10px;top:299.83px;font-size:18.46px;line-height:20px;font-weight:400;color:#585e66;transform:scaleX(0.8818);transform-origin:0 0;">ARYA ADHY NUGROHO</div>
<div class="a" style="left:872.00px;top:299.83px;font-size:18.46px;line-height:20px;font-weight:400;color:#585e66;transform:scaleX(0.8693);transform-origin:0 0;">Nasi Pecel</div>
<div class="a" style="left:1039.30px;top:299.83px;font-size:18.46px;line-height:20px;font-weight:400;color:#585e66;transform:scaleX(0.9798);transform-origin:0 0;">All</div>
<div class="a" style="left:1207.9px;top:297.33px"><svg width="29" height="29" viewBox="0 0 30 30"><circle cx="15" cy="15" r="14.4" fill="#fff" stroke="#6fd66f" stroke-width="0.9"/>
<path d="M4.2 12 A11.2 11.2 0 0 1 25.8 12" fill="none" stroke="#777" stroke-width="1.3" stroke-dasharray="0.9 0.7"/>
<path d="M4.2 18 A11.2 11.2 0 0 0 25.8 18" fill="none" stroke="#888" stroke-width="1.3" stroke-dasharray="0.9 0.7"/>
<circle cx="3" cy="15" r="0.9" fill="#222"/><circle cx="27" cy="15" r="0.9" fill="#222"/>
<path d="M8.2 14.5 Q15 6.5 21.8 14.5" fill="none" stroke="#8ad88a" stroke-width="0.9" stroke-dasharray="1 0.6"/>
<path d="M10 15.2 Q15 9.5 20 15.2" fill="none" stroke="#5cc95c" stroke-width="0.9" stroke-dasharray="1 0.6"/>
<rect x="13" y="13" width="4.2" height="3.4" fill="#e48bb0"/>
<path d="M10.3 17.6 Q15 21 19.7 17.6" fill="none" stroke="#2ec12e" stroke-width="1.4"/>
<path d="M8.6 19.4 Q15 25 21.4 19.4" fill="none" stroke="#22bf22" stroke-width="2.3"/>
</svg></div>
<div class="a" style="left:1242.20px;top:301.33px;font-size:18.46px;line-height:20px;font-weight:400;color:#585e66;transform:scaleX(0.9610);transform-origin:0 0;">Administrator</div>
<div class="a" style="left:1387.90px;top:299.83px;font-size:18.46px;line-height:20px;font-weight:400;color:#585e66;transform:scaleX(0.9107);transform-origin:0 0;">Divisi Amal Usaha</div>
<div class="a" style="left:1609.70px;top:299.83px;font-size:18.46px;line-height:20px;font-weight:400;color:#585e66;transform:scaleX(0.8957);transform-origin:0 0;">Rp 100.000</div>
<div class="a" style="left:1707.50px;top:299.83px;font-size:18.46px;line-height:20px;font-weight:400;color:#585e66;transform:scaleX(0.9252);transform-origin:0 0;">Order Pembelian</div>
<div class="a" style="left:183px;top:336.96px;width:1727px;height:51.63px;background:#fafafa;border-bottom:1px solid #e0e3e7"></div>
<div class="a cb" style="left:203.3px;top:352.96px"></div>
<div class="a" style="left:240.00px;top:351.46px;font-size:18.46px;line-height:20px;font-weight:400;color:#585e66;transform:scaleX(0.9181);transform-origin:0 0;">18/12/2024 12:44:53</div>
<div class="a" style="left:432.50px;top:351.46px;font-size:18.46px;line-height:20px;font-weight:400;color:#585e66;transform:scaleX(0.8799);transform-origin:0 0;">P00010</div>
<div class="a" style="left:544.10px;top:351.46px;font-size:18.46px;line-height:20px;font-weight:400;color:#585e66;transform:scaleX(0.8818);transform-origin:0 0;">ARYA ADHY NUGROHO</div>
<div class="a" style="left:872.00px;top:351.46px;font-size:18.46px;line-height:20px;font-weight:400;color:#585e66;transform:scaleX(0.8693);transform-origin:0 0;">Nasi Pecel</div>
<div class="a" style="left:1039.30px;top:351.46px;font-size:18.46px;line-height:20px;font-weight:400;color:#585e66;transform:scaleX(0.9798);transform-origin:0 0;">All</div>
<div class="a" style="left:1207.9px;top:348.96px"><svg width="29" height="29" viewBox="0 0 30 30"><circle cx="15" cy="15" r="14.4" fill="#fff" stroke="#6fd66f" stroke-width="0.9"/>
<path d="M4.2 12 A11.2 11.2 0 0 1 25.8 12" fill="none" stroke="#777" stroke-width="1.3" stroke-dasharray="0.9 0.7"/>
<path d="M4.2 18 A11.2 11.2 0 0 0 25.8 18" fill="none" stroke="#888" stroke-width="1.3" stroke-dasharray="0.9 0.7"/>
<circle cx="3" cy="15" r="0.9" fill="#222"/><circle cx="27" cy="15" r="0.9" fill="#222"/>
<path d="M8.2 14.5 Q15 6.5 21.8 14.5" fill="none" stroke="#8ad88a" stroke-width="0.9" stroke-dasharray="1 0.6"/>
<path d="M10 15.2 Q15 9.5 20 15.2" fill="none" stroke="#5cc95c" stroke-width="0.9" stroke-dasharray="1 0.6"/>
<rect x="13" y="13" width="4.2" height="3.4" fill="#e48bb0"/>
<path d="M10.3 17.6 Q15 21 19.7 17.6" fill="none" stroke="#2ec12e" stroke-width="1.4"/>
<path d="M8.6 19.4 Q15 25 21.4 19.4" fill="none" stroke="#22bf22" stroke-width="2.3"/>
</svg></div>
<div class="a" style="left:1242.20px;top:352.96px;font-size:18.46px;line-height:20px;font-weight:400;color:#585e66;transform:scaleX(0.9610);transform-origin:0 0;">Administrator</div>
<div class="a" style="left:1387.90px;top:351.46px;font-size:18.46px;line-height:20px;font-weight:400;color:#585e66;transform:scaleX(0.9107);transform-origin:0 0;">Divisi Amal Usaha</div>
<div class="a" style="left:1618.70px;top:351.46px;font-size:18.46px;line-height:20px;font-weight:400;color:#585e66;transform:scaleX(0.8980);transform-origin:0 0;">Rp 60.000</div>
<div class="a" style="left:1707.50px;top:351.46px;font-size:18.46px;line-height:20px;font-weight:400;color:#585e66;transform:scaleX(0.9252);transform-origin:0 0;">Order Pembelian</div>
<div class="a" style="left:183px;top:388.59px;width:1727px;height:51.63px;background:#fefefe;border-bottom:1px solid #e0e3e7"></div>
<div class="a cb" style="left:203.3px;top:404.59px"></div>
<div class="a" style="left:240.00px;top:403.09px;font-size:18.46px;line-height:20px;font-weight:400;color:#585e66;transform:scaleX(0.9181);transform-origin:0 0;">18/12/2024 12:42:40</div>
<div class="a" style="left:432.50px;top:403.09px;font-size:18.46px;line-height:20px;font-weight:400;color:#585e66;transform:scaleX(0.8799);transform-origin:0 0;">P00009</div>
<div class="a" style="left:544.10px;top:403.09px;font-size:18.46px;line-height:20px;font-weight:400;color:#585e66;transform:scaleX(0.8818);transform-origin:0 0;">ARYA ADHY NUGROHO</div>
<div class="a" style="left:872.00px;top:403.09px;font-size:18.46px;line-height:20px;font-weight:400;color:#585e66;transform:scaleX(0.8693);transform-origin:0 0;">Nasi Pecel</div>
<div class="a" style="left:1039.30px;top:403.09px;font-size:18.46px;line-height:20px;font-weight:400;color:#585e66;transform:scaleX(0.9798);transform-origin:0 0;">All</div>
<div class="a" style="left:1207.9px;top:400.59px"><svg width="29" height="29" viewBox="0 0 30 30"><circle cx="15" cy="15" r="14.4" fill="#fff" stroke="#6fd66f" stroke-width="0.9"/>
<path d="M4.2 12 A11.2 11.2 0 0 1 25.8 12" fill="none" stroke="#777" stroke-width="1.3" stroke-dasharray="0.9 0.7"/>
<path d="M4.2 18 A11.2 11.2 0 0 0 25.8 18" fill="none" stroke="#888" stroke-width="1.3" stroke-dasharray="0.9 0.7"/>
<circle cx="3" cy="15" r="0.9" fill="#222"/><circle cx="27" cy="15" r="0.9" fill="#222"/>
<path d="M8.2 14.5 Q15 6.5 21.8 14.5" fill="none" stroke="#8ad88a" stroke-width="0.9" stroke-dasharray="1 0.6"/>
<path d="M10 15.2 Q15 9.5 20 15.2" fill="none" stroke="#5cc95c" stroke-width="0.9" stroke-dasharray="1 0.6"/>
<rect x="13" y="13" width="4.2" height="3.4" fill="#e48bb0"/>
<path d="M10.3 17.6 Q15 21 19.7 17.6" fill="none" stroke="#2ec12e" stroke-width="1.4"/>
<path d="M8.6 19.4 Q15 25 21.4 19.4" fill="none" stroke="#22bf22" stroke-width="2.3"/>
</svg></div>
<div class="a" style="left:1242.20px;top:404.59px;font-size:18.46px;line-height:20px;font-weight:400;color:#585e66;transform:scaleX(0.9610);transform-origin:0 0;">Administrator</div>
<div class="a" style="left:1387.90px;top:403.09px;font-size:18.46px;line-height:20px;font-weight:400;color:#585e66;transform:scaleX(0.9107);transform-origin:0 0;">Divisi Amal Usaha</div>
<div class="a" style="left:1618.70px;top:403.09px;font-size:18.46px;line-height:20px;font-weight:400;color:#585e66;transform:scaleX(0.8980);transform-origin:0 0;">Rp 20.000</div>
<div class="a" style="left:1707.50px;top:403.09px;font-size:18.46px;line-height:20px;font-weight:400;color:#585e66;transform:scaleX(0.9252);transform-origin:0 0;">Order Pembelian</div>
<div class="a" style="left:183px;top:440.22px;width:1727px;height:51.63px;background:#fafafa;border-bottom:1px solid #e0e3e7"></div>
<div class="a cb" style="left:203.3px;top:456.22px"></div>
<div class="a" style="left:240.00px;top:454.72px;font-size:18.46px;line-height:20px;font-weight:400;color:#585e66;transform:scaleX(0.9181);transform-origin:0 0;">18/12/2024 12:39:35</div>
<div class="a" style="left:432.50px;top:454.72px;font-size:18.46px;line-height:20px;font-weight:400;color:#585e66;transform:scaleX(0.8799);transform-origin:0 0;">P00008</div>
<div class="a" style="left:544.10px;top:454.72px;font-size:18.46px;line-height:20px;font-weight:400;color:#585e66;transform:scaleX(0.8818);transform-origin:0 0;">ARYA ADHY NUGROHO</div>
<div class="a" style="left:872.00px;top:454.72px;font-size:18.46px;line-height:20px;font-weight:400;color:#585e66;transform:scaleX(0.8693);transform-origin:0 0;">Nasi Pecel</div>
<div class="a" style="left:1039.30px;top:454.72px;font-size:18.46px;line-height:20px;font-weight:400;color:#585e66;transform:scaleX(0.9798);transform-origin:0 0;">All</div>
<div class="a" style="left:1207.9px;top:452.22px"><svg width="29" height="29" viewBox="0 0 30 30"><circle cx="15" cy="15" r="14.4" fill="#fff" stroke="#6fd66f" stroke-width="0.9"/>
<path d="M4.2 12 A11.2 11.2 0 0 1 25.8 12" fill="none" stroke="#777" stroke-width="1.3" stroke-dasharray="0.9 0.7"/>
<path d="M4.2 18 A11.2 11.2 0 0 0 25.8 18" fill="none" stroke="#888" stroke-width="1.3" stroke-dasharray="0.9 0.7"/>
<circle cx="3" cy="15" r="0.9" fill="#222"/><circle cx="27" cy="15" r="0.9" fill="#222"/>
<path d="M8.2 14.5 Q15 6.5 21.8 14.5" fill="none" stroke="#8ad88a" stroke-width="0.9" stroke-dasharray="1 0.6"/>
<path d="M10 15.2 Q15 9.5 20 15.2" fill="none" stroke="#5cc95c" stroke-width="0.9" stroke-dasharray="1 0.6"/>
<rect x="13" y="13" width="4.2" height="3.4" fill="#e48bb0"/>
<path d="M10.3 17.6 Q15 21 19.7 17.6" fill="none" stroke="#2ec12e" stroke-width="1.4"/>
<path d="M8.6 19.4 Q15 25 21.4 19.4" fill="none" stroke="#22bf22" stroke-width="2.3"/>
</svg></div>
<div class="a" style="left:1242.20px;top:456.22px;font-size:18.46px;line-height:20px;font-weight:400;color:#585e66;transform:scaleX(0.9610);transform-origin:0 0;">Administrator</div>
<div class="a" style="left:1387.90px;top:454.72px;font-size:18.46px;line-height:20px;font-weight:400;color:#585e66;transform:scaleX(0.9107);transform-origin:0 0;">Divisi Amal Usaha</div>
<div class="a" style="left:1618.70px;top:454.72px;font-size:18.46px;line-height:20px;font-weight:400;color:#585e66;transform:scaleX(0.8980);transform-origin:0 0;">Rp 10.000</div>
<div class="a" style="left:1707.50px;top:454.72px;font-size:18.46px;line-height:20px;font-weight:400;color:#585e66;transform:scaleX(0.9252);transform-origin:0 0;">Order Pembelian</div>
<div class="a" style="left:183px;top:491.85px;width:1727px;height:51.63px;background:#fefefe;border-bottom:1px solid #e0e3e7"></div>
<div class="a cb" style="left:203.3px;top:507.85px"></div>
<div class="a" style="left:240.00px;top:506.35px;font-size:18.46px;line-height:20px;font-weight:400;color:#585e66;transform:scaleX(0.9181);transform-origin:0 0;">18/12/2024 12:39:35</div>
<div class="a" style="left:432.50px;top:506.35px;font-size:18.46px;line-height:20px;font-weight:400;color:#585e66;transform:scaleX(0.8799);transform-origin:0 0;">P00008</div>
<div class="a" style="left:544.10px;top:506.35px;font-size:18.46px;line-height:20px;font-weight:400;color:#585e66;transform:scaleX(0.8818);transform-origin:0 0;">ARYA ADHY NUGROHO</div>
<div class="a" style="left:872.00px;top:506.35px;font-size:18.46px;line-height:20px;font-weight:400;color:#585e66;transform:scaleX(0.8693);transform-origin:0 0;">Nasi Pecel</div>
<div class="a" style="left:1039.30px;top:506.35px;font-size:18.46px;line-height:20px;font-weight:400;color:#585e66;transform:scaleX(0.9798);transform-origin:0 0;">All</div>
<div class="a" style="left:1207.9px;top:503.85px"><svg width="29" height="29" viewBox="0 0 30 30"><circle cx="15" cy="15" r="14.4" fill="#fff" stroke="#6fd66f" stroke-width="0.9"/>
<path d="M4.2 12 A11.2 11.2 0 0 1 25.8 12" fill="none" stroke="#777" stroke-width="1.3" stroke-dasharray="0.9 0.7"/>
<path d="M4.2 18 A11.2 11.2 0 0 0 25.8 18" fill="none" stroke="#888" stroke-width="1.3" stroke-dasharray="0.9 0.7"/>
<circle cx="3" cy="15" r="0.9" fill="#222"/><circle cx="27" cy="15" r="0.9" fill="#222"/>
<path d="M8.2 14.5 Q15 6.5 21.8 14.5" fill="none" stroke="#8ad88a" stroke-width="0.9" stroke-dasharray="1 0.6"/>
<path d="M10 15.2 Q15 9.5 20 15.2" fill="none" stroke="#5cc95c" stroke-width="0.9" stroke-dasharray="1 0.6"/>
<rect x="13" y="13" width="4.2" height="3.4" fill="#e48bb0"/>
<path d="M10.3 17.6 Q15 21 19.7 17.6" fill="none" stroke="#2ec12e" stroke-width="1.4"/>
<path d="M8.6 19.4 Q15 25 21.4 19.4" fill="none" stroke="#22bf22" stroke-width="2.3"/>
</svg></div>
<div class="a" style="left:1242.20px;top:507.85px;font-size:18.46px;line-height:20px;font-weight:400;color:#585e66;transform:scaleX(0.9610);transform-origin:0 0;">Administrator</div>
<div class="a" style="left:1387.90px;top:506.35px;font-size:18.46px;line-height:20px;font-weight:400;color:#585e66;transform:scaleX(0.9107);transform-origin:0 0;">Divisi Amal Usaha</div>
<div class="a" style="left:1661.70px;top:506.35px;font-size:18.46px;line-height:20px;font-weight:400;color:#585e66;transform:scaleX(0.8591);transform-origin:0 0;">Rp 0</div>
<div class="a" style="left:1707.50px;top:506.35px;font-size:18.46px;line-height:20px;font-weight:400;color:#585e66;transform:scaleX(0.9252);transform-origin:0 0;">Order Pembelian</div>
<div class="a" style="left:183px;top:543.48px;width:1727px;height:51.63px;background:#fafafa;border-bottom:1px solid #e0e3e7"></div>
<div class="a cb" style="left:203.3px;top:559.48px"></div>
<div class="a" style="left:240.00px;top:557.98px;font-size:18.46px;line-height:20px;font-weight:400;color:#585e66;transform:scaleX(0.9181);transform-origin:0 0;">18/12/2024 12:33:31</div>
<div class="a" style="left:432.50px;top:557.98px;font-size:18.46px;line-height:20px;font-weight:400;color:#585e66;transform:scaleX(0.8799);transform-origin:0 0;">P00007</div>
<div class="a" style="left:544.10px;top:557.98px;font-size:18.46px;line-height:20px;font-weight:400;color:#585e66;transform:scaleX(0.8818);transform-origin:0 0;">ARYA ADHY NUGROHO</div>
<div class="a" style="left:872.00px;top:557.98px;font-size:18.46px;line-height:20px;font-weight:400;color:#585e66;transform:scaleX(0.8693);transform-origin:0 0;">Nasi Pecel</div>
<div class="a" style="left:1039.30px;top:557.98px;font-size:18.46px;line-height:20px;font-weight:400;color:#585e66;transform:scaleX(0.9798);transform-origin:0 0;">All</div>
<div class="a" style="left:1207.9px;top:555.48px"><svg width="29" height="29" viewBox="0 0 30 30"><circle cx="15" cy="15" r="14.4" fill="#fff" stroke="#6fd66f" stroke-width="0.9"/>
<path d="M4.2 12 A11.2 11.2 0 0 1 25.8 12" fill="none" stroke="#777" stroke-width="1.3" stroke-dasharray="0.9 0.7"/>
<path d="M4.2 18 A11.2 11.2 0 0 0 25.8 18" fill="none" stroke="#888" stroke-width="1.3" stroke-dasharray="0.9 0.7"/>
<circle cx="3" cy="15" r="0.9" fill="#222"/><circle cx="27" cy="15" r="0.9" fill="#222"/>
<path d="M8.2 14.5 Q15 6.5 21.8 14.5" fill="none" stroke="#8ad88a" stroke-width="0.9" stroke-dasharray="1 0.6"/>
<path d="M10 15.2 Q15 9.5 20 15.2" fill="none" stroke="#5cc95c" stroke-width="0.9" stroke-dasharray="1 0.6"/>
<rect x="13" y="13" width="4.2" height="3.4" fill="#e48bb0"/>
<path d="M10.3 17.6 Q15 21 19.7 17.6" fill="none" stroke="#2ec12e" stroke-width="1.4"/>
<path d="M8.6 19.4 Q15 25 21.4 19.4" fill="none" stroke="#22bf22" stroke-width="2.3"/>
</svg></div>
<div class="a" style="left:1242.20px;top:559.48px;font-size:18.46px;line-height:20px;font-weight:400;color:#585e66;transform:scaleX(0.9610);transform-origin:0 0;">Administrator</div>
<div class="a" style="left:1387.90px;top:557.98px;font-size:18.46px;line-height:20px;font-weight:400;color:#585e66;transform:scaleX(0.9107);transform-origin:0 0;">Divisi Amal Usaha</div>
<div class="a" style="left:1610.00px;top:557.98px;font-size:18.46px;line-height:20px;font-weight:400;color:#585e66;transform:scaleX(0.8926);transform-origin:0 0;">Rp 200.000</div>
<div class="a" style="left:1707.50px;top:557.98px;font-size:18.46px;line-height:20px;font-weight:400;color:#585e66;transform:scaleX(0.9252);transform-origin:0 0;">Order Pembelian</div>
<div class="a" style="left:183px;top:595.11px;width:1727px;height:51.63px;background:#fefefe;border-bottom:1px solid #e0e3e7"></div>
<div class="a cb" style="left:203.3px;top:611.11px"></div>
<div class="a" style="left:240.00px;top:609.61px;font-size:18.46px;line-height:20px;font-weight:400;color:#585e66;transform:scaleX(0.9181);transform-origin:0 0;">18/12/2024 12:28:54</div>
<div class="a" style="left:432.50px;top:609.61px;font-size:18.46px;line-height:20px;font-weight:400;color:#585e66;transform:scaleX(0.8799);transform-origin:0 0;">P00006</div>
<div class="a" style="left:544.10px;top:609.61px;font-size:18.46px;line-height:20px;font-weight:400;color:#585e66;transform:scaleX(0.8818);transform-origin:0 0;">ARYA ADHY NUGROHO</div>
<div class="a" style="left:872.00px;top:609.61px;font-size:18.46px;line-height:20px;font-weight:400;color:#585e66;transform:scaleX(0.8693);transform-origin:0 0;">Nasi Pecel</div>
<div class="a" style="left:1039.30px;top:609.61px;font-size:18.46px;line-height:20px;font-weight:400;color:#585e66;transform:scaleX(0.9798);transform-origin:0 0;">All</div>
<div class="a" style="left:1207.9px;top:607.11px"><svg width="29" height="29" viewBox="0 0 30 30"><circle cx="15" cy="15" r="14.4" fill="#fff" stroke="#6fd66f" stroke-width="0.9"/>
<path d="M4.2 12 A11.2 11.2 0 0 1 25.8 12" fill="none" stroke="#777" stroke-width="1.3" stroke-dasharray="0.9 0.7"/>
<path d="M4.2 18 A11.2 11.2 0 0 0 25.8 18" fill="none" stroke="#888" stroke-width="1.3" stroke-dasharray="0.9 0.7"/>
<circle cx="3" cy="15" r="0.9" fill="#222"/><circle cx="27" cy="15" r="0.9" fill="#222"/>
<path d="M8.2 14.5 Q15 6.5 21.8 14.5" fill="none" stroke="#8ad88a" stroke-width="0.9" stroke-dasharray="1 0.6"/>
<path d="M10 15.2 Q15 9.5 20 15.2" fill="none" stroke="#5cc95c" stroke-width="0.9" stroke-dasharray="1 0.6"/>
<rect x="13" y="13" width="4.2" height="3.4" fill="#e48bb0"/>
<path d="M10.3 17.6 Q15 21 19.7 17.6" fill="none" stroke="#2ec12e" stroke-width="1.4"/>
<path d="M8.6 19.4 Q15 25 21.4 19.4" fill="none" stroke="#22bf22" stroke-width="2.3"/>
</svg></div>
<div class="a" style="left:1242.20px;top:611.11px;font-size:18.46px;line-height:20px;font-weight:400;color:#585e66;transform:scaleX(0.9610);transform-origin:0 0;">Administrator</div>
<div class="a" style="left:1387.90px;top:609.61px;font-size:18.46px;line-height:20px;font-weight:400;color:#585e66;transform:scaleX(0.9107);transform-origin:0 0;">Divisi Amal Usaha</div>
<div class="a" style="left:1610.00px;top:609.61px;font-size:18.46px;line-height:20px;font-weight:400;color:#585e66;transform:scaleX(0.8926);transform-origin:0 0;">Rp 400.000</div>
<div class="a" style="left:1707.50px;top:609.61px;font-size:18.46px;line-height:20px;font-weight:400;color:#585e66;transform:scaleX(0.9252);transform-origin:0 0;">Order Pembelian</div>
<div class="a" style="left:183px;top:646.74px;width:1727px;height:51.63px;background:#fafafa;border-bottom:1px solid #e0e3e7"></div>
<div class="a cb" style="left:203.3px;top:662.74px"></div>
<div class="a" style="left:240.00px;top:661.24px;font-size:18.46px;line-height:20px;font-weight:400;color:#585e66;transform:scaleX(0.9181);transform-origin:0 0;">18/12/2024 12:23:25</div>
<div class="a" style="left:432.50px;top:661.24px;font-size:18.46px;line-height:20px;font-weight:400;color:#585e66;transform:scaleX(0.8799);transform-origin:0 0;">P00005</div>
<div class="a" style="left:544.10px;top:661.24px;font-size:18.46px;line-height:20px;font-weight:400;color:#585e66;transform:scaleX(0.8277);transform-origin:0 0;">AGUS EFENDI,S.SOS, MS.SI</div>
<div class="a" style="left:872.00px;top:661.24px;font-size:18.46px;line-height:20px;font-weight:400;color:#585e66;transform:scaleX(0.9338);transform-origin:0 0;">Aqua 600ml</div>
<div class="a" style="left:1039.30px;top:661.24px;font-size:18.46px;line-height:20px;font-weight:400;color:#585e66;transform:scaleX(0.9798);transform-origin:0 0;">All</div>
<div class="a" style="left:1207.9px;top:658.74px"><svg width="29" height="29" viewBox="0 0 30 30"><circle cx="15" cy="15" r="14.4" fill="#fff" stroke="#6fd66f" stroke-width="0.9"/>
<path d="M4.2 12 A11.2 11.2 0 0 1 25.8 12" fill="none" stroke="#777" stroke-width="1.3" stroke-dasharray="0.9 0.7"/>
<path d="M4.2 18 A11.2 11.2 0 0 0 25.8 18" fill="none" stroke="#888" stroke-width="1.3" stroke-dasharray="0.9 0.7"/>
<circle cx="3" cy="15" r="0.9" fill="#222"/><circle cx="27" cy="15" r="0.9" fill="#222"/>
<path d="M8.2 14.5 Q15 6.5 21.8 14.5" fill="none" stroke="#8ad88a" stroke-width="0.9" stroke-dasharray="1 0.6"/>
<path d="M10 15.2 Q15 9.5 20 15.2" fill="none" stroke="#5cc95c" stroke-width="0.9" stroke-dasharray="1 0.6"/>
<rect x="13" y="13" width="4.2" height="3.4" fill="#e48bb0"/>
<path d="M10.3 17.6 Q15 21 19.7 17.6" fill="none" stroke="#2ec12e" stroke-width="1.4"/>
<path d="M8.6 19.4 Q15 25 21.4 19.4" fill="none" stroke="#22bf22" stroke-width="2.3"/>
</svg></div>
<div class="a" style="left:1242.20px;top:662.74px;font-size:18.46px;line-height:20px;font-weight:400;color:#585e66;transform:scaleX(0.9610);transform-origin:0 0;">Administrator</div>
<div class="a" style="left:1387.90px;top:661.24px;font-size:18.46px;line-height:20px;font-weight:400;color:#585e66;transform:scaleX(0.9107);transform-origin:0 0;">Divisi Amal Usaha</div>
<div class="a" style="left:1610.00px;top:661.24px;font-size:18.46px;line-height:20px;font-weight:400;color:#585e66;transform:scaleX(0.8926);transform-origin:0 0;">Rp 400.000</div>
<div class="a" style="left:1707.50px;top:661.24px;font-size:18.46px;line-height:20px;font-weight:400;color:#585e66;transform:scaleX(0.9252);transform-origin:0 0;">Order Pembelian</div>
<div class="a" style="left:183px;top:698.37px;width:1727px;height:51.63px;background:#fefefe;border-bottom:1px solid #e0e3e7"></div>
<div class="a cb" style="left:203.3px;top:714.37px"></div>
<div class="a" style="left:240.00px;top:712.87px;font-size:18.46px;line-height:20px;font-weight:400;color:#585e66;transform:scaleX(0.9181);transform-origin:0 0;">18/12/2024 12:18:31</div>
<div class="a" style="left:432.50px;top:712.87px;font-size:18.46px;line-height:20px;font-weight:400;color:#585e66;transform:scaleX(0.8799);transform-origin:0 0;">P00004</div>
<div class="a" style="left:544.10px;top:712.87px;font-size:18.46px;line-height:20px;font-weight:400;color:#585e66;transform:scaleX(0.8818);transform-origin:0 0;">ARYA ADHY NUGROHO</div>
<div class="a" style="left:872.00px;top:712.87px;font-size:18.46px;line-height:20px;font-weight:400;color:#585e66;transform:scaleX(0.8817);transform-origin:0 0;">Es Teh Manis</div>
<div class="a" style="left:1039.30px;top:712.87px;font-size:18.46px;line-height:20px;font-weight:400;color:#585e66;transform:scaleX(0.9798);transform-origin:0 0;">All</div>
<div class="a" style="left:1207.9px;top:710.37px"><svg width="29" height="29" viewBox="0 0 30 30"><circle cx="15" cy="15" r="14.4" fill="#fff" stroke="#6fd66f" stroke-width="0.9"/>
<path d="M4.2 12 A11.2 11.2 0 0 1 25.8 12" fill="none" stroke="#777" stroke-width="1.3" stroke-dasharray="0.9 0.7"/>
<path d="M4.2 18 A11.2 11.2 0 0 0 25.8 18" fill="none" stroke="#888" stroke-width="1.3" stroke-dasharray="0.9 0.7"/>
<circle cx="3" cy="15" r="0.9" fill="#222"/><circle cx="27" cy="15" r="0.9" fill="#222"/>
<path d="M8.2 14.5 Q15 6.5 21.8 14.5" fill="none" stroke="#8ad88a" stroke-width="0.9" stroke-dasharray="1 0.6"/>
<path d="M10 15.2 Q15 9.5 20 15.2" fill="none" stroke="#5cc95c" stroke-width="0.9" stroke-dasharray="1 0.6"/>
<rect x="13" y="13" width="4.2" height="3.4" fill="#e48bb0"/>
<path d="M10.3 17.6 Q15 21 19.7 17.6" fill="none" stroke="#2ec12e" stroke-width="1.4"/>
<path d="M8.6 19.4 Q15 25 21.4 19.4" fill="none" stroke="#22bf22" stroke-width="2.3"/>
</svg></div>
<div class="a" style="left:1242.20px;top:714.37px;font-size:18.46px;line-height:20px;font-weight:400;color:#585e66;transform:scaleX(0.9610);transform-origin:0 0;">Administrator</div>
<div class="a" style="left:1387.90px;top:712.87px;font-size:18.46px;line-height:20px;font-weight:400;color:#585e66;transform:scaleX(0.9107);transform-origin:0 0;">Divisi Amal Usaha</div>
<div class="a" style="left:1610.00px;top:712.87px;font-size:18.46px;line-height:20px;font-weight:400;color:#585e66;transform:scaleX(0.8926);transform-origin:0 0;">Rp 200.000</div>
<div class="a" style="left:1707.50px;top:712.87px;font-size:18.46px;line-height:20px;font-weight:400;color:#585e66;transform:scaleX(0.9252);transform-origin:0 0;">Order Pembelian</div>
<div class="a" style="left:183px;top:750.00px;width:1727px;height:51.63px;background:#fafafa;border-bottom:1px solid #e0e3e7"></div>
<div class="a cb" style="left:203.3px;top:766.00px"></div>
<div class="a" style="left:240.00px;top:764.50px;font-size:18.46px;line-height:20px;font-weight:400;color:#585e66;transform:scaleX(0.9181);transform-origin:0 0;">18/12/2024 10:38:27</div>
<div class="a" style="left:432.50px;top:764.50px;font-size:18.46px;line-height:20px;font-weight:400;color:#585e66;transform:scaleX(0.8799);transform-origin:0 0;">P00003</div>
<div class="a" style="left:544.10px;top:764.50px;font-size:18.46px;line-height:20px;font-weight:400;color:#585e66;transform:scaleX(0.8818);transform-origin:0 0;">ARYA ADHY NUGROHO</div>
<div class="a" style="left:872.00px;top:764.50px;font-size:18.46px;line-height:20px;font-weight:400;color:#585e66;transform:scaleX(0.9139);transform-origin:0 0;">Hasduk Pramuka</div>
<div class="a" style="left:1039.30px;top:764.50px;font-size:18.46px;line-height:20px;font-weight:400;color:#585e66;transform:scaleX(0.9798);transform-origin:0 0;">All</div>
<div class="a" style="left:1207.9px;top:762.00px"><svg width="29" height="29" viewBox="0 0 30 30"><circle cx="15" cy="15" r="14.4" fill="#fff" stroke="#6fd66f" stroke-width="0.9"/>
<path d="M4.2 12 A11.2 11.2 0 0 1 25.8 12" fill="none" stroke="#777" stroke-width="1.3" stroke-dasharray="0.9 0.7"/>
<path d="M4.2 18 A11.2 11.2 0 0 0 25.8 18" fill="none" stroke="#888" stroke-width="1.3" stroke-dasharray="0.9 0.7"/>
<circle cx="3" cy="15" r="0.9" fill="#222"/><circle cx="27" cy="15" r="0.9" fill="#222"/>
<path d="M8.2 14.5 Q15 6.5 21.8 14.5" fill="none" stroke="#8ad88a" stroke-width="0.9" stroke-dasharray="1 0.6"/>
<path d="M10 15.2 Q15 9.5 20 15.2" fill="none" stroke="#5cc95c" stroke-width="0.9" stroke-dasharray="1 0.6"/>
<rect x="13" y="13" width="4.2" height="3.4" fill="#e48bb0"/>
<path d="M10.3 17.6 Q15 21 19.7 17.6" fill="none" stroke="#2ec12e" stroke-width="1.4"/>
<path d="M8.6 19.4 Q15 25 21.4 19.4" fill="none" stroke="#22bf22" stroke-width="2.3"/>
</svg></div>
<div class="a" style="left:1242.20px;top:766.00px;font-size:18.46px;line-height:20px;font-weight:400;color:#585e66;transform:scaleX(0.9610);transform-origin:0 0;">Administrator</div>
<div class="a" style="left:1387.90px;top:764.50px;font-size:18.46px;line-height:20px;font-weight:400;color:#585e66;transform:scaleX(0.9107);transform-origin:0 0;">Divisi Amal Usaha</div>
<div class="a" style="left:1596.00px;top:764.50px;font-size:18.46px;line-height:20px;font-weight:400;color:#585e66;transform:scaleX(0.8949);transform-origin:0 0;">Rp 1.000.000</div>
<div class="a" style="left:1707.50px;top:764.50px;font-size:18.46px;line-height:20px;font-weight:400;color:#585e66;transform:scaleX(0.9252);transform-origin:0 0;">Order Pembelian</div>
<div class="a" style="left:183px;top:801.63px;width:1727px;height:51.63px;background:#fefefe;border-bottom:1px solid #e0e3e7"></div>
<div class="a cb" style="left:203.3px;top:817.63px"></div>
<div class="a" style="left:240.00px;top:816.13px;font-size:18.46px;line-height:20px;font-weight:400;color:#585e66;transform:scaleX(0.9181);transform-origin:0 0;">18/12/2024 10:30:38</div>
<div class="a" style="left:432.50px;top:816.13px;font-size:18.46px;line-height:20px;font-weight:400;color:#585e66;transform:scaleX(0.8799);transform-origin:0 0;">P00001</div>
<div class="a" style="left:544.10px;top:816.13px;font-size:18.46px;line-height:20px;font-weight:400;color:#585e66;transform:scaleX(0.8818);transform-origin:0 0;">ARYA ADHY NUGROHO</div>
<div class="a" style="left:872.00px;top:816.13px;font-size:18.46px;line-height:20px;font-weight:400;color:#585e66;transform:scaleX(0.8861);transform-origin:0 0;">Kertas HVS A4</div>
<div class="a" style="left:1039.30px;top:816.13px;font-size:18.46px;line-height:20px;font-weight:400;color:#585e66;transform:scaleX(0.9798);transform-origin:0 0;">All</div>
<div class="a" style="left:1207.9px;top:813.63px"><svg width="29" height="29" viewBox="0 0 30 30"><circle cx="15" cy="15" r="14.4" fill="#fff" stroke="#6fd66f" stroke-width="0.9"/>
<path d="M4.2 12 A11.2 11.2 0 0 1 25.8 12" fill="none" stroke="#777" stroke-width="1.3" stroke-dasharray="0.9 0.7"/>
<path d="M4.2 18 A11.2 11.2 0 0 0 25.8 18" fill="none" stroke="#888" stroke-width="1.3" stroke-dasharray="0.9 0.7"/>
<circle cx="3" cy="15" r="0.9" fill="#222"/><circle cx="27" cy="15" r="0.9" fill="#222"/>
<path d="M8.2 14.5 Q15 6.5 21.8 14.5" fill="none" stroke="#8ad88a" stroke-width="0.9" stroke-dasharray="1 0.6"/>
<path d="M10 15.2 Q15 9.5 20 15.2" fill="none" stroke="#5cc95c" stroke-width="0.9" stroke-dasharray="1 0.6"/>
<rect x="13" y="13" width="4.2" height="3.4" fill="#e48bb0"/>
<path d="M10.3 17.6 Q15 21 19.7 17.6" fill="none" stroke="#2ec12e" stroke-width="1.4"/>
<path d="M8.6 19.4 Q15 25 21.4 19.4" fill="none" stroke="#22bf22" stroke-width="2.3"/>
</svg></div>
<div class="a" style="left:1242.20px;top:817.63px;font-size:18.46px;line-height:20px;font-weight:400;color:#585e66;transform:scaleX(0.9610);transform-origin:0 0;">Administrator</div>
<div class="a" style="left:1387.90px;top:816.13px;font-size:18.46px;line-height:20px;font-weight:400;color:#585e66;transform:scaleX(0.9107);transform-origin:0 0;">Divisi Amal Usaha</div>
<div class="a" style="left:1577.70px;top:816.13px;font-size:18.46px;line-height:20px;font-weight:400;color:#585e66;transform:scaleX(0.8943);transform-origin:0 0;">Rp 160.000.000</div>
<div class="a" style="left:1707.50px;top:816.13px;font-size:18.46px;line-height:20px;font-weight:400;color:#585e66;transform:scaleX(0.9252);transform-origin:0 0;">Order Pembelian</div>
<div class="a" style="left:183px;top:853.26px;width:1727px;height:51.63px;background:#fafafa;border-bottom:1px solid #e0e3e7"></div>
<div class="a cb" style="left:203.3px;top:869.26px"></div>
<div class="a" style="left:240.00px;top:867.76px;font-size:18.46px;line-height:20px;font-weight:400;color:#585e66;transform:scaleX(0.9181);transform-origin:0 0;">18/12/2024 10:30:38</div>
<div class="a" style="left:432.50px;top:867.76px;font-size:18.46px;line-height:20px;font-weight:400;color:#585e66;transform:scaleX(0.8799);transform-origin:0 0;">P00001</div>
<div class="a" style="left:544.10px;top:867.76px;font-size:18.46px;line-height:20px;font-weight:400;color:#585e66;transform:scaleX(0.8818);transform-origin:0 0;">ARYA ADHY NUGROHO</div>
<div class="a" style="left:872.00px;top:867.76px;font-size:18.46px;line-height:20px;font-weight:400;color:#585e66;transform:scaleX(0.8861);transform-origin:0 0;">Kertas HVS A4</div>
<div class="a" style="left:1039.30px;top:867.76px;font-size:18.46px;line-height:20px;font-weight:400;color:#585e66;transform:scaleX(0.9798);transform-origin:0 0;">All</div>
<div class="a" style="left:1207.9px;top:865.26px"><svg width="29" height="29" viewBox="0 0 30 30"><circle cx="15" cy="15" r="14.4" fill="#fff" stroke="#6fd66f" stroke-width="0.9"/>
<path d="M4.2 12 A11.2 11.2 0 0 1 25.8 12" fill="none" stroke="#777" stroke-width="1.3" stroke-dasharray="0.9 0.7"/>
<path d="M4.2 18 A11.2 11.2 0 0 0 25.8 18" fill="none" stroke="#888" stroke-width="1.3" stroke-dasharray="0.9 0.7"/>
<circle cx="3" cy="15" r="0.9" fill="#222"/><circle cx="27" cy="15" r="0.9" fill="#222"/>
<path d="M8.2 14.5 Q15 6.5 21.8 14.5" fill="none" stroke="#8ad88a" stroke-width="0.9" stroke-dasharray="1 0.6"/>
<path d="M10 15.2 Q15 9.5 20 15.2" fill="none" stroke="#5cc95c" stroke-width="0.9" stroke-dasharray="1 0.6"/>
<rect x="13" y="13" width="4.2" height="3.4" fill="#e48bb0"/>
<path d="M10.3 17.6 Q15 21 19.7 17.6" fill="none" stroke="#2ec12e" stroke-width="1.4"/>
<path d="M8.6 19.4 Q15 25 21.4 19.4" fill="none" stroke="#22bf22" stroke-width="2.3"/>
</svg></div>
<div class="a" style="left:1242.20px;top:869.26px;font-size:18.46px;line-height:20px;font-weight:400;color:#585e66;transform:scaleX(0.9610);transform-origin:0 0;">Administrator</div>
<div class="a" style="left:1387.90px;top:867.76px;font-size:18.46px;line-height:20px;font-weight:400;color:#585e66;transform:scaleX(0.9107);transform-origin:0 0;">Divisi Amal Usaha</div>
<div class="a" style="left:1610.00px;top:867.76px;font-size:18.46px;line-height:20px;font-weight:400;color:#585e66;transform:scaleX(0.8926);transform-origin:0 0;">Rp 400.000</div>
<div class="a" style="left:1707.50px;top:867.76px;font-size:18.46px;line-height:20px;font-weight:400;color:#585e66;transform:scaleX(0.9252);transform-origin:0 0;">Order Pembelian</div>
<div class="a" style="left:183px;top:182px;width:1727px;height:1px;background:#d8dbe0"></div>
<div class="a" style="left:183px;top:905px;width:1727px;height:5px;background:#f7f8fa"></div>
<div class="a" style="left:1910px;top:131px;width:8px;height:780px;background:#f4f5f7"></div>
<div class="a" style="left:1910px;top:131.7px;width:8px;height:742px;background:#888;border-radius:4px"></div>
<div class="a" style="left:0;top:910.6px;width:1918px;height:2px;background:#3c3c3c"></div>
<div class="a" style="left:413.5px;top:118.5px;width:919.5px;height:493.5px;background:#fff;border:3.5px solid #ff0000;border-radius:2px"></div>
<svg class="a" style="left:456.5px;top:150px" width="15" height="15.5" viewBox="0 0 15 15.5"><path d="M0 0.6 Q0 0 0.8 0 H14.2 Q15 0 14.6 0.8 L9.6 6.6 V15.2 L5.6 11.3 V6.6 L0.3 1.2Z" fill="#0d5a55"/></svg>
<div class="a" style="left:482.10px;top:147.40px;font-size:18.75px;line-height:20px;font-weight:700;color:#2a2e33;transform:scaleX(0.9398);transform-origin:0 0;">Penyaring</div>
<div class="a" style="left:462.00px;top:187.55px;font-size:18.60px;line-height:20px;font-weight:400;color:#585e66;transform:scaleX(0.9000);transform-origin:0 0;">Permintaan Penawaran</div>
<div class="a" style="left:462.00px;top:221.45px;font-size:18.60px;line-height:20px;font-weight:400;color:#585e66;transform:scaleX(0.9187);transform-origin:0 0;">Order Pembelian</div>
<div class="a" style="left:462.00px;top:255.35px;font-size:18.60px;line-height:20px;font-weight:400;color:#585e66;transform:scaleX(0.9090);transform-origin:0 0;">Tanggal Konfirmasi Tahun ...</div>
<div class="a" style="left:462.00px;top:289.55px;font-size:18.60px;line-height:20px;font-weight:400;color:#585e66;transform:scaleX(0.9203);transform-origin:0 0;">Tanggal Order</div>
<div class="a" style="left:462.00px;top:322.55px;font-size:18.60px;line-height:20px;font-weight:400;color:#585e66;transform:scaleX(0.9164);transform-origin:0 0;">Tanggal Konfirmasi</div>
<svg class="a" style="left:688.5px;top:295.9px" width="10.2" height="5.6" viewBox="0 0 10.2 5.6"><path d="M0 0 H10.2 L5.1 5.6Z" fill="#3a4048"/></svg>
<svg class="a" style="left:688.5px;top:329.9px" width="10.2" height="5.6" viewBox="0 0 10.2 5.6"><path d="M0 0 H10.2 L5.1 5.6Z" fill="#3a4048"/></svg>
<div class="a" style="left:437px;top:359px;width:272px;height:1px;background:#dfe2e6"></div>
<div class="a" style="left:462.00px;top:377.75px;font-size:18.60px;line-height:20px;font-weight:400;color:#585e66;transform:scaleX(0.9097);transform-origin:0 0;">Tambahkan Penyaring Sendiri</div>
<div class="a" style="left:728.7px;top:143px;width:1px;height:260px;background:#e3e6ea"></div>
<svg class="a" style="left:770px;top:147.8px" width="19" height="19.5" viewBox="0 0 19 19.5">
<path d="M9.5 0 L19 5 L9.5 10 L0 5Z" fill="#14a05c"/>
<path d="M0.8 8.4 L9.5 13 L18.2 8.4 V10.6 L9.5 15.2 L0.8 10.6Z" fill="#14a05c"/>
<path d="M0.8 12.4 L9.5 17 L18.2 12.4 V14.6 L9.5 19.2 L0.8 14.6Z" fill="#14a05c"/></svg>
<div class="a" style="left:800.00px;top:147.40px;font-size:18.75px;line-height:20px;font-weight:700;color:#2a2e33;transform:scaleX(0.9799);transform-origin:0 0;">Dikelompokkan</div>
<div class="a" style="left:770.70px;top:177.10px;font-size:18.75px;line-height:20px;font-weight:700;color:#2a2e33;transform:scaleX(0.9532);transform-origin:0 0;">berdasarkan</div>
<div class="a" style="left:775.30px;top:216.55px;font-size:18.60px;line-height:20px;font-weight:400;color:#585e66;transform:scaleX(0.8794);transform-origin:0 0;">Pemasok</div>
<div class="a" style="left:775.30px;top:250.40px;font-size:18.60px;line-height:20px;font-weight:400;color:#585e66;transform:scaleX(0.9292);transform-origin:0 0;">Negara Vendor</div>
<div class="a" style="left:775.30px;top:284.25px;font-size:18.60px;line-height:20px;font-weight:400;color:#585e66;transform:scaleX(0.9176);transform-origin:0 0;">Wakil Pembelian</div>
<div class="a" style="left:775.30px;top:318.10px;font-size:18.60px;line-height:20px;font-weight:400;color:#585e66;transform:scaleX(0.9279);transform-origin:0 0;">Produk</div>
<div class="a" style="left:775.30px;top:351.95px;font-size:18.60px;line-height:20px;font-weight:400;color:#585e66;transform:scaleX(0.9347);transform-origin:0 0;">Kategori Produk</div>
<div class="a" style="left:775.30px;top:385.80px;font-size:18.60px;line-height:20px;font-weight:400;color:#585e66;transform:scaleX(0.8778);transform-origin:0 0;">Status</div>
<div class="a" style="left:775.30px;top:419.65px;font-size:18.60px;line-height:20px;font-weight:400;color:#585e66;transform:scaleX(0.8780);transform-origin:0 0;">Perusahaan</div>
<div class="a" style="left:750.4px;top:456px;width:271.5px;height:1px;background:#dfe2e6"></div>
<div class="a" style="left:775.30px;top:474.15px;font-size:18.60px;line-height:20px;font-weight:400;color:#585e66;transform:scaleX(0.9237);transform-origin:0 0;">Tanggal Order</div>
<div class="a" style="left:775.30px;top:507.75px;font-size:18.60px;line-height:20px;font-weight:400;color:#585e66;transform:scaleX(0.9183);transform-origin:0 0;">Tanggal Konfirmasi</div>
<svg class="a" style="left:1001.5px;top:480.8px" width="10.2" height="5.6" viewBox="0 0 10.2 5.6"><path d="M0 0 H10.2 L5.1 5.6Z" fill="#3a4048"/></svg>
<svg class="a" style="left:1001.5px;top:514.4px" width="10.2" height="5.6" viewBox="0 0 10.2 5.6"><path d="M0 0 H10.2 L5.1 5.6Z" fill="#3a4048"/></svg>
<div class="a" style="left:750.4px;top:544px;width:271.5px;height:1px;background:#dfe2e6"></div>
<div class="a" style="left:775.30px;top:562.75px;font-size:18.60px;line-height:20px;font-weight:400;color:#585e66;transform:scaleX(0.9196);transform-origin:0 0;">Tambahkan Grup Kustom</div>
<svg class="a" style="left:997.2px;top:569.8px" width="9.6" height="5.2" viewBox="0 0 9.6 5.2"><path d="M0 0 H9.6 L4.8 5.2Z" fill="#8a9099"/></svg>
<div class="a" style="left:1042.3px;top:143px;width:1px;height:445px;background:#e3e6ea"></div>
<svg class="a" style="left:1082.8px;top:147.8px" width="19" height="17.5" viewBox="0 0 19 17.5"><path d="M9.5 0 L12 5.8 L18.6 6.3 L13.6 10.6 L15.3 17.2 L9.5 13.6 L3.7 17.2 L5.4 10.6 L0.4 6.3 L7 5.8Z" fill="#f1c900"/></svg>
<div class="a" style="left:1111.70px;top:147.40px;font-size:18.75px;line-height:20px;font-weight:700;color:#2a2e33;transform:scaleX(0.9406);transform-origin:0 0;">Favorit</div>
<div class="a" style="left:1088.50px;top:187.55px;font-size:18.60px;line-height:20px;font-weight:400;color:#585e66;transform:scaleX(0.9179);transform-origin:0 0;">Simpan pencarian saat ini</div>
<svg class="a" style="left:1289.6px;top:195.5px" width="10" height="5.5" viewBox="0 0 10 5.5"><path d="M0 0 H10 L5.0 5.5Z" fill="#3a4048"/></svg>
<div class="a" style="left:1291.8px;top:65.1px;width:41px;height:46.7px;border:3.5px solid #ff0000;border-radius:2px"></div>
<svg class="a" style="left:1335px;top:65px" width="100" height="47" viewBox="0 0 100 47"><path d="M9.1 23.5 H92 M24.8 8.3 L9.1 23.5 L24.8 38.6" fill="none" stroke="#ff1010" stroke-width="2.4" stroke-linecap="round" stroke-linejoin="round"/></svg>
</body></html>
